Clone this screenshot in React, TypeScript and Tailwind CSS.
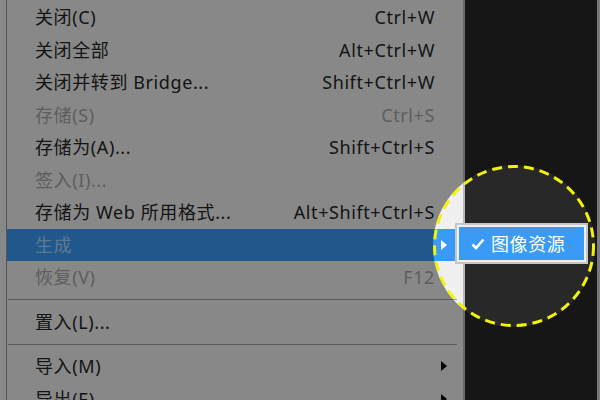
import React from "react"

type Item =
  | { kind: "row"; label: string; shortcut?: string; disabled?: boolean; sub?: boolean; active?: boolean }
  | { kind: "sep" }

const items: Item[] = [
  { kind: "row", label: "关闭(C)", shortcut: "Ctrl+W" },
  { kind: "row", label: "关闭全部", shortcut: "Alt+Ctrl+W" },
  { kind: "row", label: "关闭并转到 Bridge...", shortcut: "Shift+Ctrl+W" },
  { kind: "row", label: "存储(S)", shortcut: "Ctrl+S", disabled: true },
  { kind: "row", label: "存储为(A)...", shortcut: "Shift+Ctrl+S" },
  { kind: "row", label: "签入(I)...", disabled: true },
  { kind: "row", label: "存储为 Web 所用格式...", shortcut: "Alt+Shift+Ctrl+S" },
  { kind: "row", label: "生成", sub: true, active: true, disabled: true },
  { kind: "row", label: "恢复(V)", shortcut: "F12", disabled: true },
  { kind: "sep" },
  { kind: "row", label: "置入(L)..." },
  { kind: "sep" },
  { kind: "row", label: "导入(M)", sub: true },
  { kind: "row", label: "导出(E)", sub: true },
]

const Arrow = ({ white }: { white?: boolean }) => (
  <svg width="6" height="10" viewBox="0 0 6 10">
    <path d="M0 0 L6 5 L0 10 Z" fill={white ? "#ffffff" : "#000000"} />
  </svg>
)

export default function App() {
  return (
    <div
      className="relative w-[600px] h-[400px] overflow-hidden flex bg-[#f0f0f0] text-[18px] tracking-[0.6px]"
      style={{ fontFamily: '"Noto Sans", "Noto Sans CJK SC", sans-serif' }}
    >
      <div className="w-[6px] bg-[#f0f0f0]" />
      <div className="w-[1px] bg-[#969696]" />

      {/* menu */}
      <div className="w-[456px] flex flex-col pt-[1px] bg-[#f0f0f0]">
        {items.map((it, i) =>
          it.kind === "sep" ? (
            <div key={i} className="h-[12px] flex items-center ml-[1px] mr-[6px] shrink-0">
              <div className="w-full h-[1px] bg-[#a0a0a0]" />
            </div>
          ) : (
            <div
              key={i}
              className={
                "h-[32.5px] shrink-0 flex items-center pl-[28px] leading-none " +
                (it.active ? "bg-[#3a9bf6] text-[#a8d4ff]" : it.disabled ? "text-[#a5a5a5]" : "text-[#262626]")
              }
            >
              <span className="flex-1 whitespace-nowrap">{it.label}</span>
              <span className="whitespace-nowrap">{it.shortcut}</span>
              <span className="w-[28px] flex items-center pl-[6px]">
                {it.sub && <Arrow white={it.active} />}
              </span>
            </div>
          )
        )}
      </div>

      <div className="w-[2px] bg-[#bababa]" />
      <div className="flex-1 bg-[#282828]" />
      <div className="w-[3px] bg-[#d8d8d8]" />

      {/* submenu */}
      <div className="absolute left-[455px] top-[223px] w-[133px] h-[41px] border-2 border-[#c6c6c6] bg-[#f0f0f0] p-[2px]">
        <div className="h-full bg-[#3a9bf6] flex items-center pl-[12px] gap-[6px] text-white leading-none">
          <svg width="14" height="12" viewBox="0 0 14 12">
            <path d="M1.5 6.5 L5 10 L12.5 1.5" fill="none" stroke="#ffffff" strokeWidth="2.6" />
          </svg>
          <span>图像资源</span>
        </div>
      </div>

      {/* spotlight */}
      <div className="absolute left-[433px] top-[165px] w-[162px] h-[162px] rounded-full shadow-[0_0_0_800px_rgba(0,0,0,0.43)]">
        <svg width="162" height="162" viewBox="0 0 162 162" className="absolute inset-0">
          <circle cx="81" cy="81" r="79.5" fill="none" stroke="#f2f20c" strokeWidth="3" strokeDasharray="10 6" />
        </svg>
      </div>
    </div>
  )
}
